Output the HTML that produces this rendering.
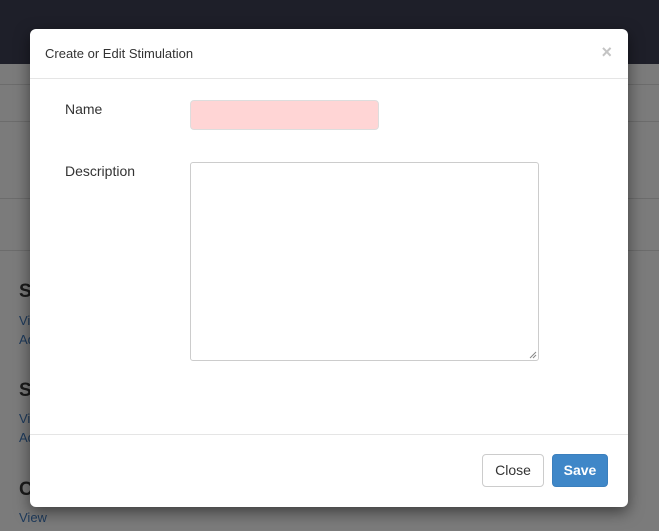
<!DOCTYPE html>
<html><head><style>
*{margin:0;padding:0;box-sizing:border-box}
body{width:659px;height:531px;overflow:hidden;background:#7b7b7b;font-family:"Liberation Sans",sans-serif;position:relative}
.top{position:absolute;left:0;top:0;width:659px;height:64px;background:#1e1f29}
.ln{position:absolute;left:0;width:659px;height:1px;background:#6c6c6c}
.bg{position:absolute;left:19px;color:#1a1a1a;font-weight:bold;font-size:19px}
.lk{position:absolute;left:19px;color:#1d3a5c;font-size:13px}
.modal{position:absolute;left:30px;top:29px;width:598px;height:478px;background:#fff;border-radius:6px;box-shadow:0 5px 15px rgba(0,0,0,.5)}
.hd{height:50px;border-bottom:1px solid #e5e5e5;font-size:13px;color:#333;padding:17px 15px}
.x{position:absolute;right:16px;top:13px;color:#c4c4c4;font-weight:bold;font-size:18px}
.lbl{position:absolute;left:35px;font-size:14px;color:#333}
.ft{position:absolute;left:0;top:405px;width:598px;height:1px;background:#e5e5e5}
.btn{position:absolute;top:425px;height:33px;border-radius:4px;font-size:14px;text-align:center;line-height:31px}
</style></head><body>
<div class="top"></div>
<div class="ln" style="top:84px"></div>
<div class="ln" style="top:121px"></div>
<div class="ln" style="top:198px"></div>
<div class="ln" style="top:250px"></div>
<div class="bg" style="top:281px">S</div>
<div class="lk" style="top:313px">Vi</div>
<div class="lk" style="top:332px">Ad</div>
<div class="bg" style="top:380px">S</div>
<div class="lk" style="top:411px">Vi</div>
<div class="lk" style="top:430px">Ad</div>
<div class="bg" style="top:479px">C</div>
<div class="lk" style="top:510px">View</div>
<div class="modal">
<div class="hd">Create or Edit Stimulation</div>
<div class="x">×</div>
<div class="lbl" style="top:72px">Name</div>
<div style="position:absolute;left:160px;top:71px;width:189px;height:30px;background:#ffd5d5;border:1px solid #ddd;border-radius:4px"></div>
<div class="lbl" style="top:134px">Description</div>
<div style="position:absolute;left:160px;top:133px;width:349px;height:199px;border:1px solid #ccc;border-radius:3px">
<svg style="position:absolute;right:1px;bottom:1px" width="8" height="8"><path d="M1 7L7 1M4 7L7 4" stroke="#888" stroke-width="1"/></svg>
</div>
<div class="ft"></div>
<div class="btn" style="left:452px;width:62px;border:1px solid #ccc;color:#333">Close</div>
<div class="btn" style="left:522px;width:56px;background:#3f87c8;border:1px solid #3b7fbd;color:#fff;font-weight:bold">Save</div>
</div>
</body></html>
